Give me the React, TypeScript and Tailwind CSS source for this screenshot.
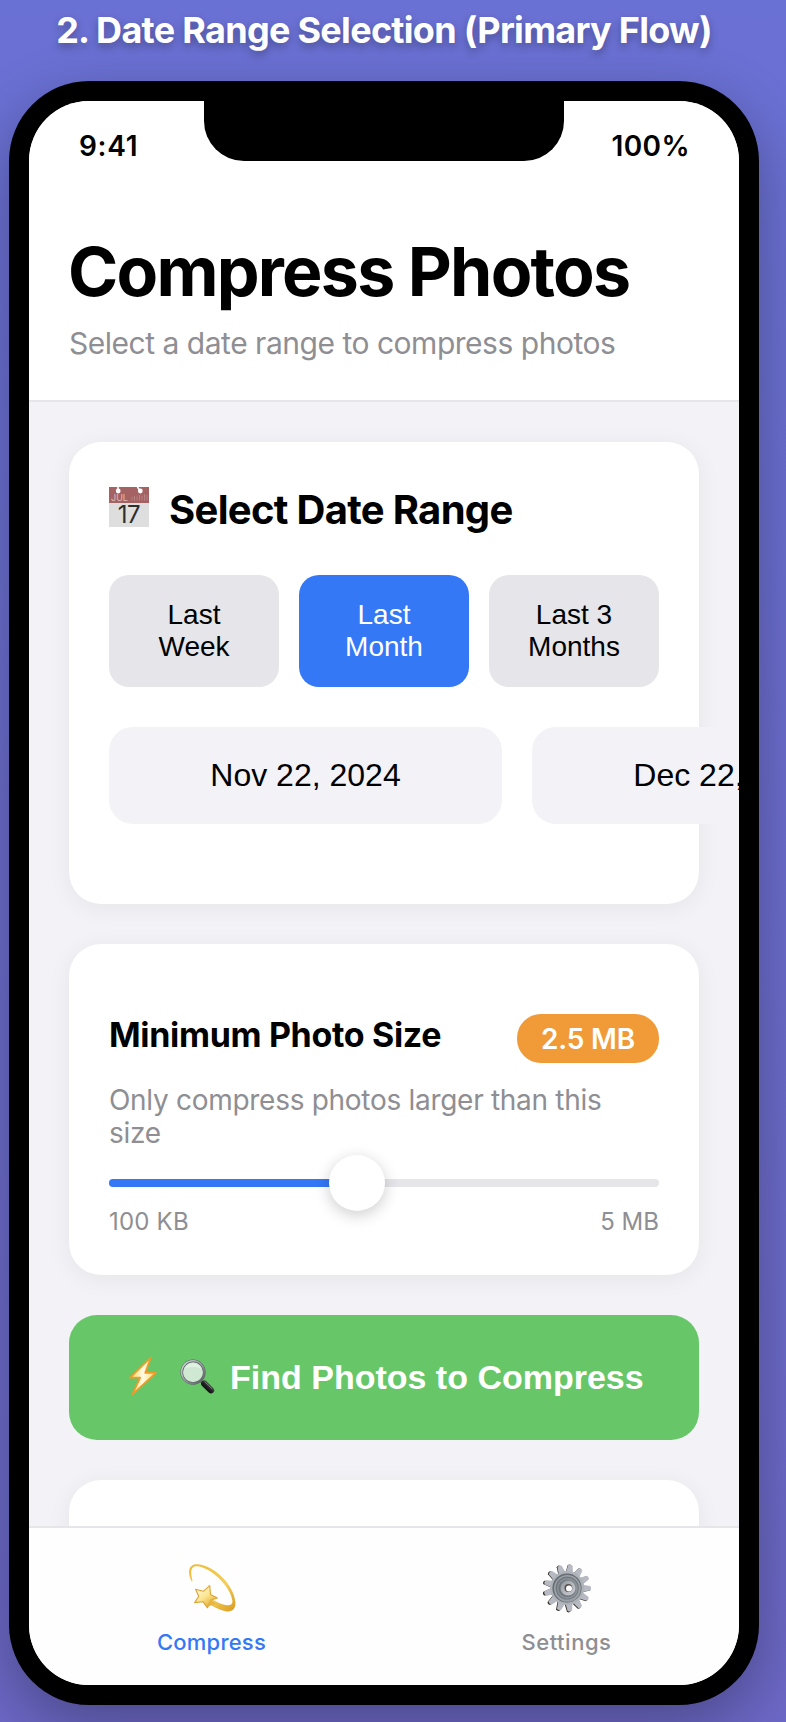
import React from "react";

function CalendarIcon() {
  return (
    <svg width="40" height="40" viewBox="0 0 40 40" className="block shrink-0 overflow-visible">
      <rect width="40" height="40" fill="#dedede" />
      <rect width="40" height="16" fill="#a46263" />
      <circle cx="9.2" cy="4" r="2.4" fill="#fff" />
      <circle cx="31.3" cy="4" r="2.4" fill="#fff" />
      <path d="M9 0v3M28.4 0l2.4 3.4" stroke="#fff" strokeWidth="1.6" />
      <text x="2" y="14" fontSize="9" fontFamily="Inter, sans-serif" fill="#dcbcbc">JUL</text>
      <path d="M23 13.5V10M25.5 13.5V9M28 13.5V9.5M30.5 13.5V8M33 13.5V8.5M35.5 13.5V7M38 13.5V8" stroke="#bb8a8a" strokeWidth="0.8" />
      <text x="20" y="36" fontSize="24" textAnchor="middle" letterSpacing="-0.5" fontFamily="Inter, sans-serif" fill="#2e2e2e">17</text>
    </svg>
  );
}

function BoltIcon() {
  return (
    <svg width="28" height="40" viewBox="0 0 28 40" className="block shrink-0">
      <defs>
        <linearGradient id="bolt" x1="0" y1="0" x2="1" y2="0">
          <stop offset="0" stopColor="#ffd858" />
          <stop offset="0.5" stopColor="#fffbe8" />
          <stop offset="1" stopColor="#ffdc62" />
        </linearGradient>
      </defs>
      <path d="M21.8 1.5 1.2 21.6H11.2L3.4 38.4 26.8 16.8H16.2Z" fill="url(#bolt)" stroke="#ef9a2b" strokeWidth="1.7" strokeLinejoin="round" />
    </svg>
  );
}

function MagnifierIcon() {
  return (
    <svg width="36" height="36" viewBox="0 0 36 36" className="block shrink-0">
      <defs>
        <linearGradient id="handle" x1="1" y1="0" x2="0" y2="1">
          <stop offset="0" stopColor="#6b6b70" />
          <stop offset="0.5" stopColor="#222226" />
          <stop offset="1" stopColor="#08080a" />
        </linearGradient>
        <linearGradient id="rim" x1="0" y1="0" x2="1" y2="1">
          <stop offset="0" stopColor="#d9dde0" />
          <stop offset="1" stopColor="#54595e" />
        </linearGradient>
      </defs>
      <path d="M20.5 21.5l4 4" stroke="#62666b" strokeWidth="3" />
      <path d="M24.3 24.6 31 31.2" stroke="url(#handle)" strokeWidth="6.4" strokeLinecap="round" />
      <path d="M24.8 22.8 31.6 29.4" stroke="#77777c" strokeWidth="1" strokeLinecap="round" />
      <circle cx="13" cy="13.2" r="11.3" fill="#cfe8d1" stroke="#5c6266" strokeWidth="2.6" />
      <circle cx="13" cy="13.2" r="11.4" fill="none" stroke="url(#rim)" strokeWidth="1.6" />
      <path d="M4.6 10a9 9 0 0 1 16.8 0c-5-2.6-12-2.6-16.8 0Z" fill="#e0f2e2" />
    </svg>
  );
}

function DizzyIcon() {
  return (
    <svg width="48" height="50" viewBox="0 0 48 50" className="block">
      <defs>
        <linearGradient id="tail" x1="0" y1="0" x2="1" y2="1">
          <stop offset="0" stopColor="#efba35" />
          <stop offset="0.6" stopColor="#f3cf5a" />
          <stop offset="1" stopColor="#d99a20" />
        </linearGradient>
        <linearGradient id="star" x1="0" y1="0" x2="0.7" y2="1">
          <stop offset="0" stopColor="#fffdf0" />
          <stop offset="0.55" stopColor="#fbe690" />
          <stop offset="1" stopColor="#e0a52a" />
        </linearGradient>
      </defs>
      <path d="M3.7 18.4C-.8 10 .5 1.5 8 1.2 24 .5 46 21 47.4 39 48 46 44 49.6 37.5 48.2 30 46.5 24 43.2 18.5 39L23 35.5C28 38.5 34 42 39.5 42.2 43.5 42.4 44.8 40.500 44.3 37.2 42.5 23 22 3.8 8.8 3.2 2.500 3 2.2 9.500 4.500 17.800Z" fill="url(#tail)" />
      <path d="M21.7 22.6 22.5 31.4 29.3 35 22.7 37.2 19.5 44.8 15 38.7 6.7 39.6 10.7 33.2 7.6 26.2 15.3 28.3Z" fill="url(#star)" stroke="#dca336" strokeWidth="1.1" strokeLinejoin="round" />
      <path d="M22.5 36.8 27.5 40.8 19.7 43.8Z" fill="#e8b53e" />
    </svg>
  );
}

const toothAngles = [8, 35.7, 63.4, 91.1, 118.8, 146.5, 174.2, 201.9, 229.6, 257.3, 285, 312.7, 340.4];

function GearIcon() {
  return (
    <svg width="48" height="50" viewBox="0 0 48 50" className="block">
      <defs>
        <linearGradient id="plate" x1="0" y1="0" x2="1" y2="1">
          <stop offset="0" stopColor="#8e949b" />
          <stop offset="0.5" stopColor="#b2b6bd" />
          <stop offset="1" stopColor="#c9cad1" />
        </linearGradient>
      </defs>
      {toothAngles.map((angle) => (
        <path key={angle} d="M20.2 11 21.4 2.2Q23.3.4 25.2 2.2L27 11Z" fill="#39342f" transform={`rotate(${angle} 23.4 25.4)`} />
      ))}
      {toothAngles.map((angle) => (
        <path key={angle} d="M20.600 11 22 2.200Q24.200.4 26.400 2.200L28.200 11Z" fill="#b7bac2" transform={`rotate(${angle} 24.4 25)`} />
      ))}
      <circle cx="24.2" cy="25" r="17" fill="#aeb2b9" />
      <circle cx="24" cy="25" r="14.6" fill="#666d74" />
      <circle cx="24.4" cy="25.4" r="13.4" fill="#9ba1a7" />
      <circle cx="24.2" cy="25" r="11.6" fill="#727980" />
      <circle cx="24.5" cy="25.4" r="10.4" fill="#8d9399" />
      <circle cx="24.2" cy="25.2" r="8.8" fill="#6f767c" />
      <circle cx="25" cy="25" r="7.6" fill="url(#plate)" />
      <circle cx="25.4" cy="25" r="3.9" fill="#5a4f48" />
      <circle cx="26" cy="25.4" r="3" fill="#fff" />
    </svg>
  );
}

const presets = [
  { top: "Last", bottom: "Week", active: false },
  { top: "Last", bottom: "Month", active: true },
  { top: "Last 3", bottom: "Months", active: false },
];

export default function App() {
  return (
    <div className="flex h-[1722px] w-[786px] flex-col overflow-hidden bg-linear-to-b from-[#6a71d4] to-[#6c68c6] pl-[9px] font-['Inter',sans-serif] text-black">
      <h2 className="w-[750px] pt-[8px] text-center text-[36px] leading-[44px] font-bold tracking-[-0.71px] whitespace-nowrap text-white [text-shadow:0_4px_8px_rgba(0,0,0,0.3)]">
        2. Date Range Selection (Primary Flow)
      </h2>
      <div className="mt-[29px] h-[1624px] w-[750px] shrink-0 rounded-[80px] bg-black p-[20px] shadow-[0_20px_60px_rgba(0,0,0,0.3)]">
        <div className="relative flex h-full w-full flex-col overflow-hidden rounded-[60px] bg-[#f2f2f7]">
          <div className="absolute top-0 left-[175px] h-[60px] w-[360px] rounded-b-[40px] bg-black" />

          <div className="flex h-[88px] shrink-0 items-center justify-between bg-white pr-[49px] pl-[50px] text-[28px] leading-[34px] font-semibold">
            <span className="pt-[2px] tracking-[0.7px]">9:41</span>
            <span className="pt-[2px] tracking-[0.4px]">100%</span>
          </div>

          <header className="h-[213px] shrink-0 border-b-2 border-[#e5e5ea] bg-white px-[40px] pt-[41px]">
            <h1 className="-ml-[1px] text-[68px] leading-[82px] font-bold tracking-[-1.77px] whitespace-nowrap">Compress Photos</h1>
            <p className="mt-[13px] text-[30px] leading-[36px] tracking-[-0.48px] text-[#8e8e93]">Select a date range to compress photos</p>
          </header>

          <main className="flex min-h-0 flex-1 flex-col gap-[40px] overflow-hidden px-[40px] pt-[40px]">
            <section className="h-[462px] shrink-0 rounded-[32px] bg-white px-[40px] pt-[44px] shadow-[0_4px_24px_rgba(0,0,0,0.06)]">
              <div className="flex h-[48px] items-center gap-[20px]">
                <div className="-mt-[6px]">
                  <CalendarIcon />
                </div>
                <h3 className="text-[40px] leading-[48px] font-bold tracking-[-0.69px] whitespace-nowrap">Select Date Range</h3>
              </div>
              <div className="mt-[41px] grid grid-cols-3 gap-[20px]">
                {presets.map((p) => (
                  <button
                    key={p.bottom}
                    className={
                      p.active
                        ? "h-[112px] rounded-[20px] bg-[#3478f6] font-['Liberation_Sans',sans-serif] text-[28px] leading-[32px] text-white"
                        : "h-[112px] rounded-[20px] bg-[#e5e5ea] font-['Liberation_Sans',sans-serif] text-[28px] leading-[32px] text-black"
                    }
                  >
                    {p.top}
                    <br />
                    {p.bottom}
                  </button>
                ))}
              </div>
              <div className="mt-[40px] flex gap-[30px] font-['Liberation_Sans',sans-serif] text-[32px] leading-[36px]">
                <div className="flex h-[97px] w-[393px] shrink-0 items-center justify-center rounded-[24px] bg-[#f2f2f7] pb-[2px] whitespace-nowrap">Nov 22, 2024</div>
                <div className="flex h-[97px] w-[393px] shrink-0 items-center justify-center rounded-[24px] bg-[#f2f2f7] pb-[2px] whitespace-nowrap">Dec 22, 2024</div>
              </div>
            </section>

            <section className="h-[331px] shrink-0 rounded-[32px] bg-white px-[40px] pt-[70px] shadow-[0_4px_24px_rgba(0,0,0,0.06)]">
              <div className="flex h-[49px] items-start justify-between">
                <h3 className="text-[34px] leading-[42px] font-bold tracking-[-0.33px] whitespace-nowrap">Minimum Photo Size</h3>
                <span className="flex h-[49px] w-[142px] items-center justify-center rounded-[24px] bg-[#f19a38] text-[28px] leading-[34px] font-semibold tracking-[-0.2px] whitespace-nowrap text-white">2.5 MB</span>
              </div>
              <p className="mt-[21px] text-[28px] leading-[33px] tracking-[-0.29px] text-[#8e8e93]">
                Only compress photos larger than this
                <br />
                size
              </p>
              <div className="relative mt-[29px] h-[8px] rounded-[4px] bg-[#e5e5ea]">
                <div className="h-[8px] w-[45%] rounded-[4px] bg-[#3478f6]" />
                <div className="absolute top-[-24px] left-[220px] h-[56px] w-[56px] rounded-full bg-white shadow-[0_4px_16px_rgba(0,0,0,0.2)]" />
              </div>
              <div className="mt-[20px] flex justify-between text-[24px] leading-[29px] text-[#8e8e93]">
                <span className="tracking-[0.2px]">100 KB</span>
                <span>5 MB</span>
              </div>
            </section>

            <button className="flex h-[125px] shrink-0 items-center rounded-[28px] bg-[#67c768] pl-[60px] font-['Liberation_Sans',sans-serif] text-[34px] leading-[40px] font-bold text-white">
              <span className="-mt-[3px]">
                <BoltIcon />
              </span>
              <span className="-mt-[2px] ml-[23px]">
                <MagnifierIcon />
              </span>
              <span className="-mt-[2px] ml-[14px] whitespace-nowrap">Find Photos to Compress</span>
            </button>

            <section className="h-[240px] shrink-0 rounded-[32px] bg-white shadow-[0_4px_24px_rgba(0,0,0,0.06)]" />
          </main>

          <nav className="grid h-[159px] shrink-0 grid-cols-2 border-t-2 border-[#e5e5ea] bg-[#fdfefd] pt-[35px] text-[22px] leading-[28px] font-medium">
            <div className="flex flex-col items-center pl-[10px] text-[#3478f6]">
              <DizzyIcon />
              <span className="mt-[15px] tracking-[0.22px]">Compress</span>
            </div>
            <div className="flex flex-col items-center pl-[10px] text-[#8e8e93]">
              <GearIcon />
              <span className="mt-[15px] tracking-[0.5px]">Settings</span>
            </div>
          </nav>
        </div>
      </div>
    </div>
  );
}
